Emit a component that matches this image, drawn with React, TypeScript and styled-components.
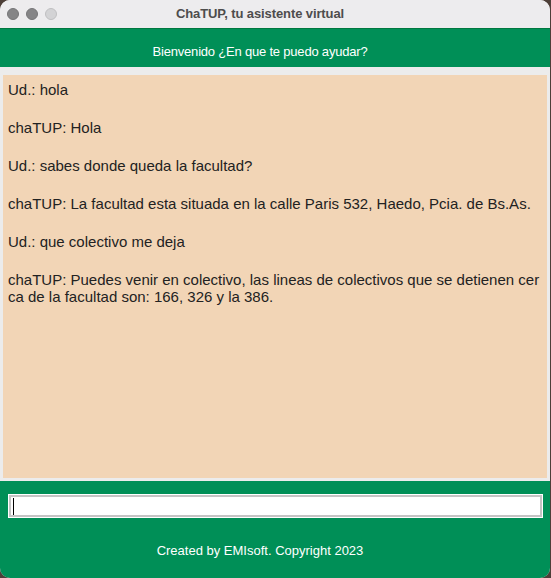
import React from 'react';
import styled, { createGlobalStyle } from 'styled-components';

const GlobalStyle = createGlobalStyle`
  html, body {
    margin: 0;
    padding: 0;
    background: #4d3f38;
  }
  body {
    font-family: "Liberation Sans", Arial, sans-serif;
  }
`;

const Window = styled.div`
  width: 550px;
  height: 578px;
  display: flex;
  flex-direction: column;
  background: #ececec;
  border-radius: 10px;
  overflow: hidden;
`;

const TitleBar = styled.div`
  height: 28px;
  display: flex;
  align-items: center;
  padding-left: 7px;
  background: #edecee;
  flex-shrink: 0;
`;

const Lights = styled.div`
  display: flex;
  gap: 7px;
`;

const Light = styled.span<{ $light?: boolean }>`
  width: 12px;
  height: 12px;
  border-radius: 50%;
  box-sizing: border-box;
  background: ${(p) => (p.$light ? '#d3d3d5' : '#858587')};
  border: 1px solid ${(p) => (p.$light ? '#bfbfc1' : '#767678')};
`;

const Title = styled.div`
  flex: 1;
  padding-right: 87px;
  text-align: center;
  font-size: 13px;
  font-weight: 700;
  line-height: 28px;
  letter-spacing: -0.1px;
  color: #4d4d4d;
`;

const Header = styled.div`
  height: 39px;
  box-sizing: border-box;
  padding: 15px 30px 0 0;
  border-top: 1px solid #00783f;
  background: #008f57;
  color: #ffffff;
  font-size: 13px;
  line-height: 15px;
  letter-spacing: -0.2px;
  text-align: center;
  flex-shrink: 0;
`;

const Body = styled.div`
  flex: 1;
  display: flex;
  padding: 8px 3px 3px 3px;
  min-height: 0;
`;

const ChatArea = styled.div`
  flex: 1;
  display: flex;
  flex-direction: column;
  gap: 19px;
  padding: 4px 5px;
  background: #f2d5b6;
  color: #222222;
  font-size: 15px;
`;

const Message = styled.p`
  margin: 0;
  padding-top: 2px;
  line-height: 17px;
  white-space: nowrap;
`;

const Footer = styled.div`
  height: 97px;
  box-sizing: border-box;
  padding: 13px 7px 0 8px;
  background: #008f57;
  display: flex;
  flex-direction: column;
  flex-shrink: 0;
`;

const InputBox = styled.div`
  height: 24px;
  box-sizing: border-box;
  padding: 1px;
  background: #ffffff;
`;

const InputField = styled.div`
  height: 100%;
  box-sizing: border-box;
  border: 2px solid #c4c4c4;
  background: #ffffff;
  display: flex;
  align-items: center;
  padding-left: 2px;
`;

const Caret = styled.span`
  width: 1px;
  height: 17px;
  background: #000000;
`;

const Credits = styled.div`
  margin-top: 25px;
  padding-right: 31px;
  text-align: center;
  color: #ffffff;
  font-size: 13px;
  line-height: 15px;
`;

const messages: React.ReactNode[] = [
  'Ud.: hola',
  'chaTUP: Hola',
  'Ud.: sabes donde queda la facultad?',
  'chaTUP: La facultad esta situada en la calle Paris 532, Haedo, Pcia. de Bs.As.',
  'Ud.: que colectivo me deja',
  <>
    chaTUP: Puedes venir en colectivo, las lineas de colectivos que se detienen cer
    <br />
    ca de la facultad son: 166, 326 y la 386.
  </>,
];

const App: React.FC = () => {
  return (
    <>
      <GlobalStyle />
      <Window>
        <TitleBar>
          <Lights>
            <Light />
            <Light />
            <Light $light />
          </Lights>
          <Title>ChaTUP, tu asistente virtual</Title>
        </TitleBar>
        <Header>Bienvenido ¿En que te puedo ayudar?</Header>
        <Body>
          <ChatArea>
            {messages.map((m, i) => (
              <Message key={i}>{m}</Message>
            ))}
          </ChatArea>
        </Body>
        <Footer>
          <InputBox>
            <InputField>
              <Caret />
            </InputField>
          </InputBox>
          <Credits>Created by EMIsoft. Copyright 2023</Credits>
        </Footer>
      </Window>
    </>
  );
};

export default App;
